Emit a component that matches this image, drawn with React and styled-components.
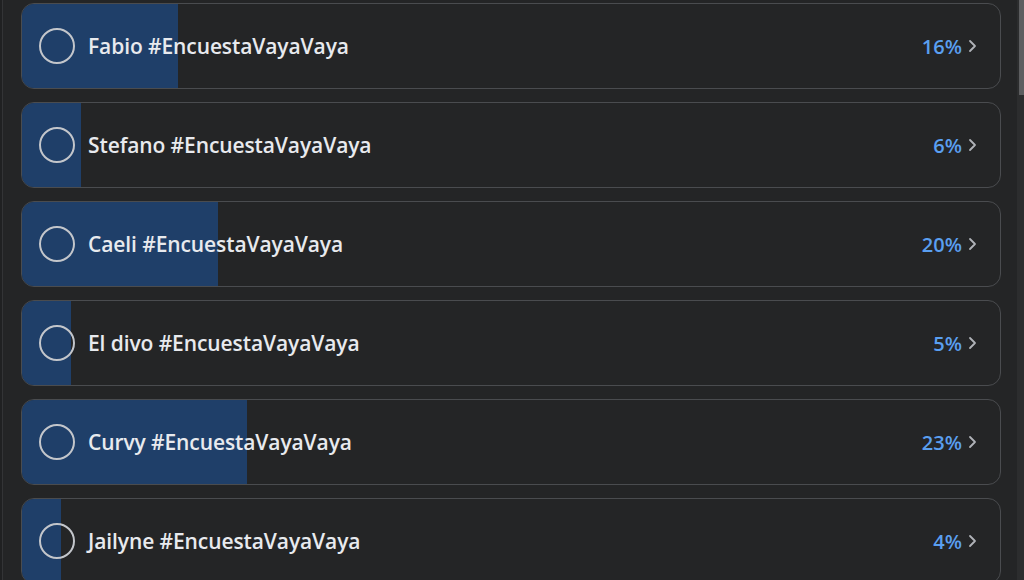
import React from "react";
import styled, { createGlobalStyle } from "styled-components";

const GlobalStyle = createGlobalStyle`
  html, body {
    margin: 0;
    padding: 0;
    background: #242526;
    overflow: hidden;
  }
  * { box-sizing: border-box; }
`;

const Page = styled.div`
  display: flex;
  height: 580px;
  width: 1024px;
  background: #242526;
  overflow: hidden;
`;

const Edge = styled.div`
  width: 3px;
  border-right: 1px solid #333436;
  background: #202122;
`;

const List = styled.div`
  flex: 1;
  display: flex;
  flex-direction: column;
  gap: 13px;
  padding: 3px 16px 0 18px;
`;

const Option = styled.div`
  position: relative;
  flex: 0 0 86px;
  display: flex;
  align-items: center;
  border: 1px solid #4a4c4f;
  border-radius: 13px;
  overflow: hidden;
  background: #242526;
  padding: 0 23px 0 17px;
`;

const Fill = styled.div`
  position: absolute;
  left: 0;
  top: 0;
  bottom: 0;
  background: #1f3f69;
`;

const Radio = styled.span`
  position: relative;
  width: 36px;
  height: 36px;
  border-radius: 50%;
  border: 2px solid #c3c6cb;
  flex: none;
`;

const Label = styled.span`
  position: relative;
  margin-left: 13px;
  flex: 1;
  font-family: "Open Sans", "Noto Sans", sans-serif;
  font-weight: 600;
  font-size: 21px;
  color: #e8eaee;
  letter-spacing: -0.1px;
`;

const Percent = styled.span`
  position: relative;
  font-family: "Open Sans", "Noto Sans", sans-serif;
  font-weight: 600;
  font-size: 20px;
  color: #5a9ff0;
`;

const Chevron = styled.svg`
  position: relative;
  margin-left: 6px;
  flex: none;
`;

const Scrollbar = styled.div`
  width: 7px;
  background: #2c2d2e;
  display: flex;
  flex-direction: column;
`;

const Thumb = styled.div`
  height: 95px;
  margin-left: 2px;
  background: #5d5e60;
`;

const options = [
  { name: "Fabio", pct: 16 },
  { name: "Stefano", pct: 6 },
  { name: "Caeli", pct: 20 },
  { name: "El divo", pct: 5 },
  { name: "Curvy", pct: 23 },
  { name: "Jailyne", pct: 4 },
];

export default function App() {
  return (
    <Page>
      <GlobalStyle />
      <Edge />
      <List>
        {options.map((o) => (
          <Option key={o.name}>
            <Fill style={{ width: `${o.pct}%` }} />
            <Radio />
            <Label>{o.name} #EncuestaVayaVaya</Label>
            <Percent>{o.pct}%</Percent>
            <Chevron width="9" height="14" viewBox="0 0 9 14">
              <path d="M2 2l5 5-5 5" fill="none" stroke="#b0b3b8" strokeWidth="1.8" strokeLinecap="round" strokeLinejoin="round" />
            </Chevron>
          </Option>
        ))}
      </List>
      <Scrollbar>
        <Thumb />
      </Scrollbar>
    </Page>
  );
}
